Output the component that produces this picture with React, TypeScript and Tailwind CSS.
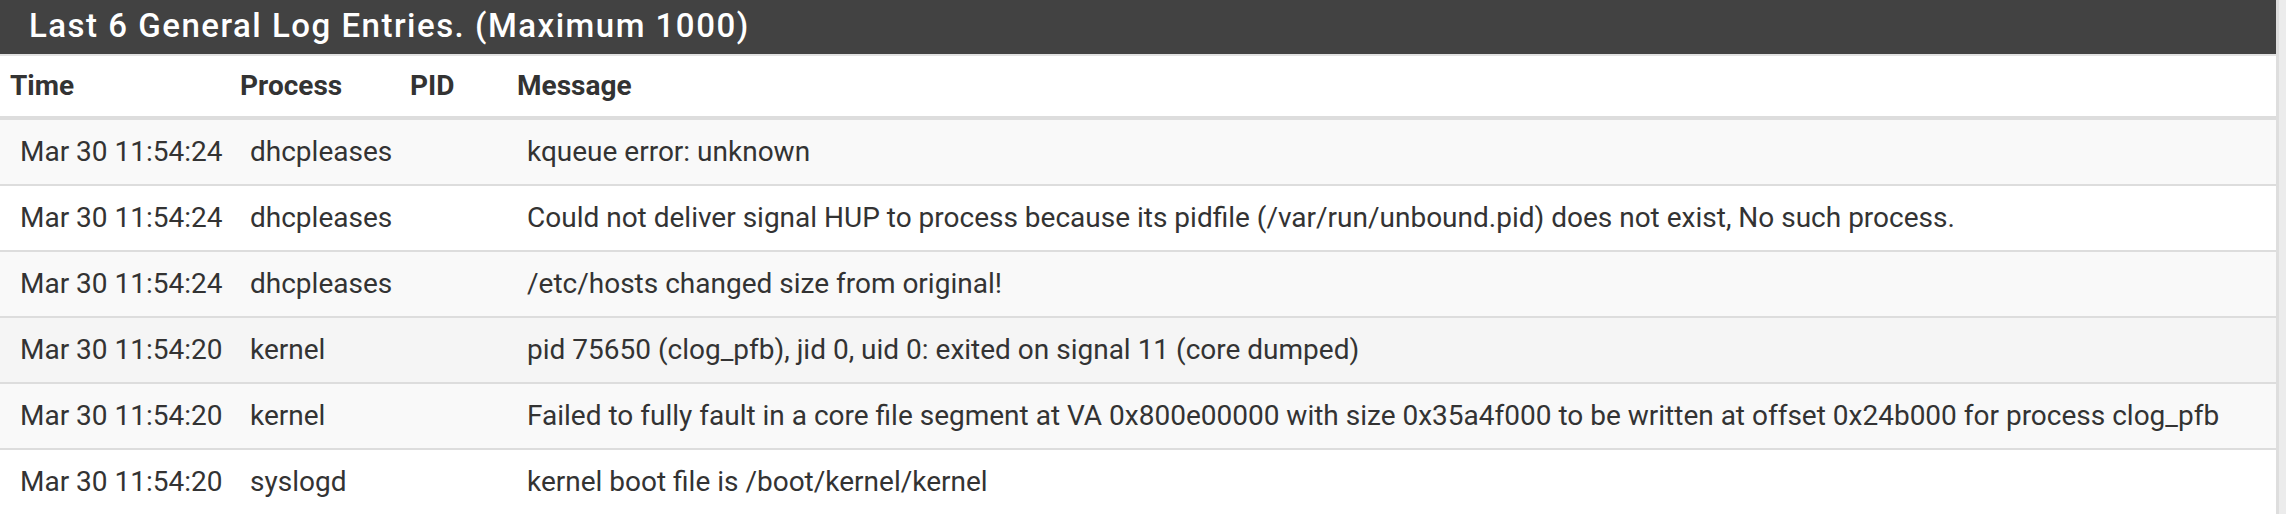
import React from 'react';

interface LogEntry {
  time: string;
  process: string;
  pid: string;
  message: string;
}

const entries: LogEntry[] = [
  { time: 'Mar 30 11:54:24', process: 'dhcpleases', pid: '', message: 'kqueue error: unknown' },
  {
    time: 'Mar 30 11:54:24',
    process: 'dhcpleases',
    pid: '',
    message:
      'Could not deliver signal HUP to process because its pidfile (/var/run/unbound.pid) does not exist, No such process.',
  },
  { time: 'Mar 30 11:54:24', process: 'dhcpleases', pid: '', message: '/etc/hosts changed size from original!' },
  {
    time: 'Mar 30 11:54:20',
    process: 'kernel',
    pid: '',
    message: 'pid 75650 (clog_pfb), jid 0, uid 0: exited on signal 11 (core dumped)',
  },
  {
    time: 'Mar 30 11:54:20',
    process: 'kernel',
    pid: '',
    message:
      'Failed to fully fault in a core file segment at VA 0x800e00000 with size 0x35a4f000 to be written at offset 0x24b000 for process clog_pfb',
  },
  { time: 'Mar 30 11:54:20', process: 'syslogd', pid: '', message: 'kernel boot file is /boot/kernel/kernel' },
];

const App: React.FC = () => {
  // row 4 is shown hovered in the screenshot
  const rowBg = (i: number) => (i === 3 ? 'bg-[#f5f5f5]' : i % 2 === 0 ? 'bg-[#f9f9f9]' : 'bg-white');

  return (
    <div
      className="w-[2286px] h-[514px] overflow-hidden bg-[#ececec] text-[#333]"
      style={{ fontFamily: 'Roboto, "Liberation Sans", sans-serif' }}
    >
      <div className="w-[2279px] h-full bg-white border-r-[3px] border-[#dedede]">
        {/* Panel heading */}
        <div className="h-[51px] bg-[#424242] flex items-center pl-[29px] pb-[3px] border-b-2 border-[#e2e2e2] box-content">
          <h2 className="text-white text-[33px] font-medium tracking-[1.5px] leading-none">
            Last 6 General Log Entries. (Maximum 1000)
          </h2>
        </div>

        {/* Column headers */}
        <div className="grid grid-cols-[230px_170px_107px_1fr] h-[60px] items-center border-b-4 border-[#dddddd] box-content text-[28px] font-bold">
          <div className="pl-[10px]">Time</div>
          <div className="pl-[10px]">Process</div>
          <div className="pl-[10px]">PID</div>
          <div className="pl-[10px]">Message</div>
        </div>

        {/* Rows */}
        {entries.map((e, i) => (
          <div
            key={i}
            className={`grid grid-cols-[230px_170px_107px_1fr] h-[64px] items-center border-b-2 border-[#dddddd] box-content text-[28px] whitespace-nowrap ${rowBg(i)}`}
          >
            <div className="pl-[20px]">{e.time}</div>
            <div className="pl-[20px]">{e.process}</div>
            <div className="pl-[20px]">{e.pid}</div>
            <div className="pl-[20px]">{e.message}</div>
          </div>
        ))}
      </div>
    </div>
  );
};

export default App;
